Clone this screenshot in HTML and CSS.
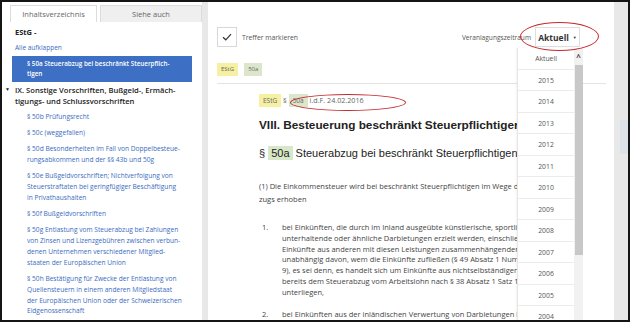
FILE: index.html
```html
<!DOCTYPE html>
<html lang="de">
<head>
  <meta charset="UTF-8">
  <title>EStG § 50a</title>
  <link rel="stylesheet" href="styles.css">
</head>
<body>
  <div class="frame">
    <aside class="sidebar">
      <div class="tabs">
        <div class="tab active">Inhaltsverzeichnis</div>
        <div class="tab">Siehe auch</div>
      </div>
      <div class="law-title">EStG -</div>
      <a class="expand-all" href="#">Alle aufklappen</a>
      <div class="toc-current">§ 50a Steuerabzug bei beschränkt Steuerpflich-<br>tigen</div>
      <div class="toc-section">
        <span class="caret">▼</span>
        <span>IX. Sonstige Vorschriften, Bußgeld-, Ermäch-<br>tigungs- und Schlussvorschriften</span>
      </div>
      <ul class="toc-list">
        <li>§ 50b Prüfungsrecht</li>
        <li>§ 50c (weggefallen)</li>
        <li>§ 50d Besonderheiten im Fall von Doppelbesteue-<br>rungsabkommen und der §§ 43b und 50g</li>
        <li>§ 50e Bußgeldvorschriften; Nichtverfolgung von<br>Steuerstraftaten bei geringfügiger Beschäftigung<br>in Privathaushalten</li>
        <li>§ 50f Bußgeldvorschriften</li>
        <li>§ 50g Entlastung vom Steuerabzug bei Zahlungen<br>von Zinsen und Lizenzgebühren zwischen verbun-<br>denen Unternehmen verschiedener Mitglied-<br>staaten der Europäischen Union</li>
        <li>§ 50h Bestätigung für Zwecke der Entlastung von<br>Quellensteuern in einem anderen Mitgliedstaat<br>der Europäischen Union oder der Schweizerischen<br>Eidgenossenschaft</li>
      </ul>
    </aside>

    <main class="main">
      <div class="toolbar">
        <div class="check-box">
          <svg width="10" height="8" viewBox="0 0 10 8"><path d="M1 4.2 L3.8 6.8 L9 1.2" fill="none" stroke="#333" stroke-width="1.2"/></svg>
        </div>
        <span class="check-label">Treffer markieren</span>
        <span class="period-label">Veranlagungszeitraum</span>
        <div class="period-select">Aktuell <span class="arrow">▼</span></div>
      </div>

      <div class="tags">
        <span class="tag tag-law">EStG</span>
        <span class="tag tag-par">50a</span>
      </div>

      <article class="doc">
        <div class="doc-meta">
          <span class="tag tag-law">EStG</span> § <span class="tag tag-par">50a</span> i.d.F. 24.02.2016
        </div>
        <h1>VIII. Besteuerung beschränkt Steuerpflichtiger</h1>
        <h2>§ <span class="hl">50a</span> Steuerabzug bei beschränkt Steuerpflichtigen</h2>
        <p class="para">(1) Die Einkommensteuer wird bei beschränkt Steuerpflichtigen im Wege des Steuerab-<br>zugs erhoben</p>
        <ol class="points">
          <li><span class="num">1.</span><span>bei Einkünften, die durch im Inland ausgeübte künstlerische, sportliche,<br>unterhaltende oder ähnliche Darbietungen erzielt werden, einschließlich der<br>Einkünfte aus anderen mit diesen Leistungen zusammenhängenden Leistungen,<br>unabhängig davon, wem die Einkünfte zufließen (§ 49 Absatz 1 Nummer 2 bis<br>9), es sei denn, es handelt sich um Einkünfte aus nichtselbständiger Arbeit, die<br>bereits dem Steuerabzug vom Arbeitslohn nach § 38 Absatz 1 Satz 1 Nummer 1<br>unterliegen,</span></li>
          <li><span class="num">2.</span><span>bei Einkünften aus der inländischen Verwertung von Darbietungen im Sinne</span></li>
        </ol>
      </article>

      <div class="year-menu">
        <ul>
          <li>Aktuell</li>
          <li>2015</li>
          <li>2014</li>
          <li>2013</li>
          <li>2012</li>
          <li>2011</li>
          <li>2010</li>
          <li>2009</li>
          <li>2008</li>
          <li>2007</li>
          <li>2006</li>
          <li>2005</li>
          <li>2004</li>
        </ul>
        <div class="menu-scroll">
          <span class="scroll-up">^</span>
          <div class="scroll-thumb"></div>
        </div>
      </div>
    </main>

    <div class="page-scroll"><div class="page-thumb"></div></div>

    <div class="mark mark-select"></div>
    <div class="mark mark-date"></div>
  </div>
</body>
</html>
```

FILE: styles.css
```css
* {
  margin: 0;
  padding: 0;
  box-sizing: border-box;
}

body {
  background: #ffffff;
  font-family: 'Open Sans', sans-serif;
}

.frame {
  position: relative;
  width: 630px;
  height: 322px;
  border: 2px solid #151515;
  background-color: #e8e8e8;
  display: flex;
  gap: 6px;
  overflow: hidden;
}

/* sidebar */

.sidebar {
  width: 200px;
  background: white;
  padding: 3px 0 0 0;
  flex-shrink: 0;
}

.tabs {
  display: flex;
  gap: 3px;
  padding-left: 8px;
}

.tab {
  height: 17px;
  line-height: 17px;
  text-align: center;
  font-size: 7.5px;
  color: #666;
  border: 1px solid #dcdcdc;
  border-bottom: none;
  background-color: #efefef;
  flex: 1;
}

.tab.active {
  width: 87px;
  flex: none;
  background: white;
}

.law-title {
  font-size: 7.5px;
  font-weight: 700;
  color: #222;
  padding: 5px 0 0 13px;
  line-height: 10px;
}

.expand-all {
  display: block;
  font-size: 6.5px;
  color: #3a6cc0;
  text-decoration: none;
  padding: 6px 0 0 13px;
  line-height: 10px;
}

.toc-current {
  margin: 3px 10px 0 10px;
  background-color: #3d6fc4;
  color: white;
  font-weight: 600;
  font-size: 6.3px;
  line-height: 10px;
  padding: 3px 0 3px 15px;
}

.toc-section {
  display: flex;
  font-size: 7.6px;
  font-weight: 600;
  color: #222;
  line-height: 11px;
  padding: 3px 0 0 3px;
}

.caret {
  font-size: 5px;
  width: 10px;
  line-height: 9px;
}

.toc-list {
  list-style: none;
  padding: 5px 0 0 25px;
  font-size: 6.6px;
  color: #3a6cc0;
  line-height: 10.8px;
}

.toc-list li {
  margin-bottom: 5.4px;
}

/* main */

.main {
  position: relative;
  width: 406px;
  background: white;
  padding: 25px 0 0 9px;
  flex-shrink: 0;
}

.toolbar {
  display: flex;
  align-items: center;
  height: 20px;
}

.check-box {
  width: 20px;
  height: 20px;
  border: 1px solid #d8d8d8;
  display: flex;
  align-items: center;
  justify-content: center;
}

.check-label {
  font-size: 6.8px;
  color: #555;
  margin-left: 5px;
}

.period-label {
  font-size: 6.6px;
  color: #555;
  margin-left: auto;
  margin-right: 4px;
}

.period-select {
  width: 45px;
  height: 20px;
  margin-right: 34px;
  border: 1px solid #dedede;
  font-size: 8.5px;
  font-weight: 700;
  color: #333;
  display: flex;
  align-items: center;
  justify-content: center;
  gap: 4px;
}

.arrow {
  font-size: 4px;
}

.tags {
  display: flex;
  gap: 6px;
  margin-top: 16px;
  padding-bottom: 7px;
  border-bottom: 1px solid #e4e4e4;
  margin-right: 8px;
}

.tag {
  display: inline-block;
  font-size: 6px;
  color: #666;
  padding: 0 4px;
  line-height: 13px;
}

.tag-law {
  background-color: #f6f0a2;
}

.tag-par {
  background-color: #dbe6cb;
}

/* text runs on under the year menu, so it is cut at its left edge */
.doc {
  width: 300px;
  padding-left: 42px;
  white-space: nowrap;
  overflow: hidden;
}

.doc-meta {
  font-size: 7.2px;
  color: #666;
  margin-top: 10px;
  line-height: 13px;
}

.doc-meta .tag {
  font-size: 6.5px;
}

h1 {
  font-family: 'Liberation Sans', Arial, sans-serif;
  font-size: 11.8px;
  font-weight: 700;
  color: #222;
  margin-top: 11px;
  line-height: 14px;
}

h2 {
  font-family: 'Liberation Sans', Arial, sans-serif;
  font-size: 11px;
  font-weight: 400;
  color: #222;
  margin-top: 13px;
  line-height: 17px;
}

.hl {
  background-color: #d7e8c8;
  padding: 1px 3px;
}

.para {
  font-size: 7.5px;
  color: #444;
  line-height: 13px;
  margin-top: 18px;
}

.points {
  list-style: none;
  margin-top: 16px;
  font-size: 7.5px;
  color: #444;
  line-height: 10.8px;
}

.points li {
  display: flex;
  margin-bottom: 11px;
}

.num {
  width: 23px;
  padding-left: 3px;
  flex-shrink: 0;
}

/* year dropdown */

.year-menu {
  position: absolute;
  left: 309px;
  top: 46px;
  width: 66px;
  height: 290px;
  background: white;
  border-left: 1px solid #e6e6e6;
  display: flex;
  box-shadow: -1px 0 2px rgba(0, 0, 0, 0.05);
}

.year-menu ul {
  list-style: none;
  flex: 1;
}

.year-menu li {
  height: 21.5px;
  line-height: 21px;
  text-align: center;
  font-size: 6.8px;
  color: #555;
  border-bottom: 1px solid #ececec;
}

.menu-scroll {
  width: 9px;
  background-color: #f1f1f1;
  position: relative;
}

.scroll-up {
  display: block;
  text-align: center;
  font-size: 8px;
  font-weight: 700;
  color: #444;
  line-height: 12px;
  padding-top: 3px;
}

.scroll-thumb {
  margin: 2px 0 0 1px;
  width: 8px;
  height: 190px;
  background-color: #c8c8c8;
}

.page-scroll {
  width: 14px;
  padding-top: 118px;
}

.page-thumb {
  height: 34px;
  background-color: #dde2e8;
}

/* red annotation rings */

.mark {
  position: absolute;
  border: 1.5px solid #c62a2f;
  border-radius: 50%;
}

.mark-select {
  left: 518px;
  top: 20px;
  width: 79px;
  height: 29px;
}

.mark-date {
  left: 288px;
  top: 92px;
  width: 116px;
  height: 17px;
}
```
